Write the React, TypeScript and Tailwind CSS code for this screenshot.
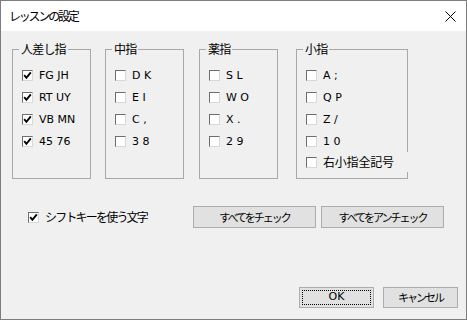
import React from 'react';

const jp = { fontFamily: '"Noto Sans CJK JP", "Noto Sans", sans-serif' };
const latin = { fontFamily: 'Tahoma, "DejaVu Sans", "Noto Sans CJK JP", sans-serif' };

function Check({ checked }: { checked: boolean }): React.ReactElement {
  return (
    <span className="w-[11px] h-[11px] shrink-0 bg-white border border-t-[#6d6d6d] border-l-[#6d6d6d] border-b-[#d8d8d8] border-r-[#d8d8d8] flex items-center justify-center">
      {checked && (
        <svg width="9" height="9" viewBox="0 0 9 9" fill="none" stroke="#000" strokeWidth="1.9">
          <polyline points="1.2,4.2 3.4,6.8 7.8,1.4" />
        </svg>
      )}
    </span>
  );
}

function Row({ label, checked = false, h = 'h-[22px]', jpClass }: { label: string; checked?: boolean; h?: string; jpClass?: string }) {
  return (
    <div className={`flex items-center gap-[6px] ${h}`}>
      <Check checked={checked} />
      <span
        className={`text-black whitespace-pre leading-none ${jpClass ?? 'text-[11px]'}`}
        style={jpClass ? jp : latin}
      >
        {label}
      </span>
    </div>
  );
}

function Group({ title, width, children }: { title: string; width: string; children: React.ReactNode }) {
  return (
    <div className={`relative ${width} h-[130px] border border-[#a8a8a8] pl-[9px] pt-[14px]`}>
      {/* label sits over the top border */}
      <span className="absolute -top-[9px] left-[6px] px-[2px] bg-[#f0f0f0] text-[12px] tracking-[-0.8px] leading-[16px] text-black" style={jp}>
        {title}
      </span>
      {children}
    </div>
  );
}

function Button({ label, className, focused = false }: { label: string; className: string; focused?: boolean }) {
  return (
    <button className={`${className} bg-[#e1e1e1] border border-[#adadad] flex items-center justify-center p-[2px]`}>
      <span
        className={`w-full h-full flex items-center justify-center text-black ${focused ? 'border border-dotted border-black text-[11px]' : 'text-[11px] tracking-[-2px]'}`}
        style={focused ? latin : jp}
      >
        {label}
      </span>
    </button>
  );
}

export default function App(): React.ReactElement {
  return (
    <div className="w-[467px] h-[320px] border border-[#7d7d7d] bg-[#f0f0f0] flex flex-col select-none">
      <div className="h-[30px] bg-white flex items-center justify-between pl-[8px] pr-[10px] shrink-0">
        <span className="text-[12px] tracking-[-2.2px] text-black" style={jp}>レッスンの設定</span>
        <svg width="11" height="11" viewBox="0 0 11 11" fill="none" stroke="#000" strokeWidth="1">
          <line x1="0.5" y1="0.5" x2="10.5" y2="10.5" />
          <line x1="10.5" y1="0.5" x2="0.5" y2="10.5" />
        </svg>
      </div>

      <div className="flex pl-[11px] pt-[18px]">
        <Group title="人差し指" width="w-[79px]">
          <Row label="FG JH" checked />
          <Row label="RT UY" checked />
          <Row label="VB MN" checked />
          <Row label="45 76" checked />
        </Group>
        <div className="ml-[14px]">
          <Group title="中指" width="w-[79px]">
            <Row label="D K" />
            <Row label="E I" />
            <Row label="C ," />
            <Row label="3 8" />
          </Group>
        </div>
        <div className="ml-[15px]">
          <Group title="薬指" width="w-[79px]">
            <Row label="S L" />
            <Row label="W O" />
            <Row label="X ." />
            <Row label="2 9" />
          </Group>
        </div>
        <div className="ml-[18px]">
          <Group title="小指" width="w-[112px]">
            <Row label="A ;" />
            <Row label="Q P" />
            <Row label="Z /" />
            <Row label="1 0" />
            <div className="bg-[#f0f0f0] w-[104px]">
              <Row label="右小指全記号" h="h-[20px]" jpClass="text-[12px] tracking-[-0.2px]" />
            </div>
          </Group>
        </div>
      </div>

      <div className="flex items-center pl-[27px] mt-[27px]">
        <div className="w-[165px]">
          <Row label="シフトキーを使う文字" checked jpClass="text-[12px] tracking-[-1.8px]" />
        </div>
        <Button label="すべてをチェック" className="w-[123px] h-[22px]" />
        <Button label="すべてをアンチェック" className="w-[123px] h-[22px] ml-[5px]" />
      </div>

      <div className="flex justify-end gap-[9px] pr-[8px] mt-auto mb-[11px]">
        <Button label="OK" className="w-[75px] h-[21px]" focused />
        <Button label="キャンセル" className="w-[75px] h-[21px]" />
      </div>
    </div>
  );
}
